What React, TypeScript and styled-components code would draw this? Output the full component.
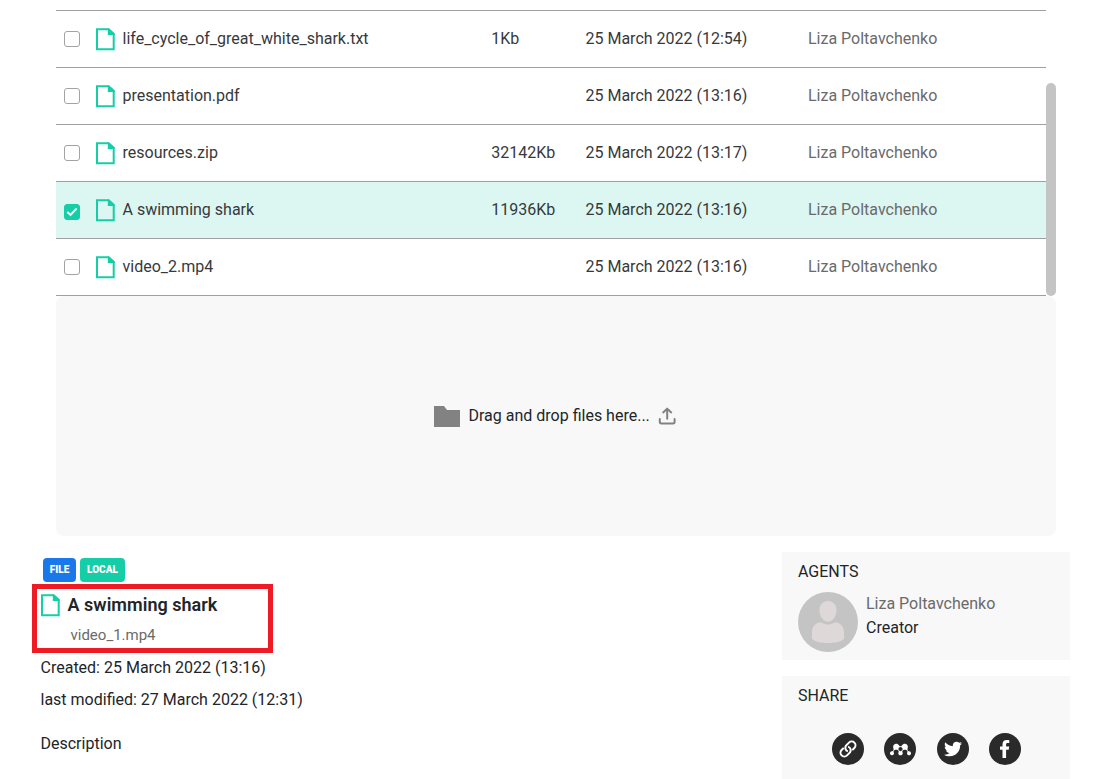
import React from "react";
import styled, { createGlobalStyle } from "styled-components";
import { FaMendeley, FaTwitter } from "react-icons/fa";

const GlobalStyle = createGlobalStyle`
  * { box-sizing: border-box; }
  html, body { margin: 0; background: #fff; overflow: hidden; }
  body { font-family: Roboto, "Liberation Sans", sans-serif; font-size: 16px; line-height: 24px; color: #212529; }
`;

const Page = styled.main`
  width: 1099px;
  height: 779px;
  overflow: hidden;
  padding-top: 10px;
`;

const ListArea = styled.section`
  display: flex;
  width: 1000px;
  height: 286px;
  margin-left: 56px;
`;

const Rows = styled.div`
  width: 990px;
  border-top: 1px solid #9f9f9f;
`;

const Row = styled.div<{ $selected?: boolean }>`
  display: grid;
  grid-template-columns: 40px 395.3px 94.2px 222.5px 1fr;
  align-items: center;
  height: 57px;
  border-bottom: 1px solid #9f9f9f;
  background: ${(p) => (p.$selected ? "#dcf7f2" : "#fff")};
  color: #36393c;
`;

const CheckBox = styled.span<{ $checked?: boolean }>`
  display: flex;
  align-items: center;
  justify-content: center;
  width: 16px;
  height: 16px;
  margin: ${(p) => (p.$checked ? "4px 0 0 8px" : "0 0 0 8px")};
  border: 1px solid ${(p) => (p.$checked ? "#15cea7" : "#a3a3a3")};
  border-radius: 3px;
  background: ${(p) => (p.$checked ? "#15cea7" : "#fff")};
`;

const FileCell = styled.div`
  display: flex;
  align-items: center;
  gap: 7.5px;
`;

const Author = styled.span`
  color: #6a6a6a;
`;

const ScrollTrack = styled.div`
  width: 10px;
  padding-top: 73px;
`;

const ScrollThumb = styled.div`
  height: 213px;
  border-radius: 5px;
  background: #c4c4c4;
`;

const DropZone = styled.section`
  display: flex;
  align-items: center;
  justify-content: center;
  width: 1000px;
  height: 240px;
  margin-left: 56px;
  padding-right: 2px;
  border-radius: 8px;
  background: #f8f8f8;
`;

const DropLabel = styled.span`
  margin: 0 8.5px 0 8.8px;
`;

const Lower = styled.div`
  display: flex;
  justify-content: space-between;
  padding: 16px 29px 0 41px;
`;

const Details = styled.section`
  position: relative;
  padding-top: 6px;
`;

const Badges = styled.div`
  display: flex;
  gap: 4px;
  margin-left: 2px;
`;

const Badge = styled.span<{ $color: string; $width: number }>`
  width: ${(p) => p.$width}px;
  height: 24px;
  border-radius: 4px;
  background: ${(p) => p.$color};
  color: #fff;
  font-size: 10px;
  font-weight: 900;
  line-height: 23px;
  text-align: center;
`;

const Title = styled.h2`
  display: flex;
  align-items: center;
  gap: 7.5px;
  height: 24px;
  margin: 11px 0 0;
  font-size: 18px;
  font-weight: 600;
  letter-spacing: 0.03px;
`;

const FileName = styled.div`
  height: 24px;
  margin: 6px 0 0 29.5px;
  color: #6a6a6a;
  font-size: 15px;
`;

const Meta = styled.p<{ $top: number }>`
  height: 24px;
  margin: ${(p) => p.$top}px 0 0 -0.5px;
`;

const Highlight = styled.div`
  position: absolute;
  top: 32px;
  left: -9px;
  width: 241px;
  height: 69px;
  border: 5px solid #ee1b24;
`;

const Side = styled.aside`
  display: flex;
  flex-direction: column;
  gap: 16px;
  width: 288px;
`;

const Panel = styled.section<{ $height: number }>`
  height: ${(p) => p.$height}px;
  padding: 8px 16px 0;
  background: #f8f8f8;
`;

const PanelTitle = styled.h3`
  height: 24px;
  margin: 0;
  font-size: 16px;
  font-weight: 400;
`;

const Agent = styled.div`
  display: flex;
  gap: 8px;
  margin-top: 8px;
`;

const ShareList = styled.div`
  display: flex;
  justify-content: space-between;
  width: 189px;
  margin: 25px 0 0 34px;
`;

const ShareButton = styled.a`
  display: flex;
  align-items: center;
  justify-content: center;
  width: 32px;
  height: 32px;
  border-radius: 50%;
  background: #2a2a2a;
  color: #fff;
`;

const FileIcon = () => (
  <svg width="19" height="23" viewBox="0 0 19 23">
    <path d="M1 1.2H12.6L17.7 6V21.3H1Z" fill="none" stroke="#15cea7" strokeWidth="2" />
    <path d="M11.8 0.5H13L18.6 5.6V7H11.8Z" fill="#15cea7" />
  </svg>
);

const Tick = () => (
  <svg width="12" height="10" viewBox="0 0 12 10">
    <path d="M1.3 4.9 4.5 7.9 10.6 1.5" fill="none" stroke="#fff" strokeWidth="2" />
  </svg>
);

const FolderIcon = () => (
  <svg width="26" height="21" viewBox="0 0 26 21">
    <path d="M0 0H10L13 4H26V21H0Z" fill="#828282" />
  </svg>
);

const UploadIcon = () => (
  <svg width="18" height="18" viewBox="0 0 18 18" fill="none" stroke="#828282" strokeWidth="2" strokeLinecap="round" strokeLinejoin="round">
    <path d="M1.8 12V14.8Q1.8 16.4 3.4 16.4H15Q16.6 16.4 16.6 14.8V12M9.2 11.8V2M5.2 5.4 9.2 1.6 13.2 5.4" />
  </svg>
);

const Avatar = () => (
  <svg width="60" height="60" viewBox="0 0 60 60">
    <circle cx="30" cy="30" r="30" fill="#c4c4c4" />
    <path
      d="M30 9C35 9 38.5 12.5 38.5 18C38.5 24 35 29.7 30 29.7S21.5 24 21.5 18C21.5 12.5 25 9 30 9ZM22 30.5C24.5 30.5 26 32.5 30 32.5S35.5 30.5 38 30.5C43 31 46 35 46 40V46.5C43 50 37 51 30 51S17 50 14 46.5V40C14 35 17 31 22 30.5Z"
      fill="#ded8d8"
    />
  </svg>
);

const LinkIcon = () => (
  <svg width="20" height="20" viewBox="0 0 20 20" fill="none" stroke="#fff" strokeWidth="2">
    <g transform="rotate(-45 10 10)">
      <path d="M8.2 11.6A3.8 3.8 0 0 1 11 6.2H15.2A3.8 3.8 0 0 1 15.2 13.8H12.2" />
      <path d="M11.8 8.4A3.8 3.8 0 0 1 9 13.8H4.8A3.8 3.8 0 0 1 4.8 6.2H7.8" />
    </g>
  </svg>
);

const FacebookIcon = () => (
  <svg width="10" height="18" viewBox="0 0 10 18">
    <path d="M2.5 18V9.7H0V6.4H2.5V4.2C2.5 1.5 4.1 0 6.6 0C7.8 0 8.7.1 9.3.2V3.1H7.8C6.4 3.1 6.1 3.8 6.1 4.7V6.4H9.2L8.7 9.7H6.1V18Z" fill="#fff" />
  </svg>
);

const files = [
  { name: "life_cycle_of_great_white_shark.txt", size: "1Kb", date: "25 March 2022 (12:54)" },
  { name: "presentation.pdf", size: "", date: "25 March 2022 (13:16)" },
  { name: "resources.zip", size: "32142Kb", date: "25 March 2022 (13:17)" },
  { name: "A swimming shark", size: "11936Kb", date: "25 March 2022 (13:16)", selected: true },
  { name: "video_2.mp4", size: "", date: "25 March 2022 (13:16)" },
];

export default function App() {
  return (
    <Page>
      <GlobalStyle />
      <ListArea>
        <Rows>
          {files.map((f) => (
            <Row key={f.name} $selected={f.selected}>
              <CheckBox $checked={f.selected}>{f.selected && <Tick />}</CheckBox>
              <FileCell>
                <FileIcon />
                <span>{f.name}</span>
              </FileCell>
              <span>{f.size}</span>
              <span>{f.date}</span>
              <Author>Liza Poltavchenko</Author>
            </Row>
          ))}
        </Rows>
        <ScrollTrack>
          <ScrollThumb />
        </ScrollTrack>
      </ListArea>
      <DropZone>
        <FolderIcon />
        <DropLabel>Drag and drop files here...</DropLabel>
        <UploadIcon />
      </DropZone>
      <Lower>
        <Details>
          <Badges>
            <Badge $color="#1a79ea" $width={33}>FILE</Badge>
            <Badge $color="#15cea7" $width={45}>LOCAL</Badge>
          </Badges>
          <Title>
            <FileIcon />
            <span>A swimming shark</span>
          </Title>
          <FileName>video_1.mp4</FileName>
          <Meta $top={9}>Created: 25 March 2022 (13:16)</Meta>
          <Meta $top={8}>last modified: 27 March 2022 (12:31)</Meta>
          <Meta $top={20}>Description</Meta>
          <Highlight />
        </Details>
        <Side>
          <Panel $height={108}>
            <PanelTitle>AGENTS</PanelTitle>
            <Agent>
              <Avatar />
              <div>
                <Author>Liza Poltavchenko</Author>
                <div>Creator</div>
              </div>
            </Agent>
          </Panel>
          <Panel $height={120}>
            <PanelTitle>SHARE</PanelTitle>
            <ShareList>
              <ShareButton><LinkIcon /></ShareButton>
              <ShareButton><FaMendeley size={21} /></ShareButton>
              <ShareButton><FaTwitter size={18} /></ShareButton>
              <ShareButton><FacebookIcon /></ShareButton>
            </ShareList>
          </Panel>
        </Side>
      </Lower>
    </Page>
  );
}
